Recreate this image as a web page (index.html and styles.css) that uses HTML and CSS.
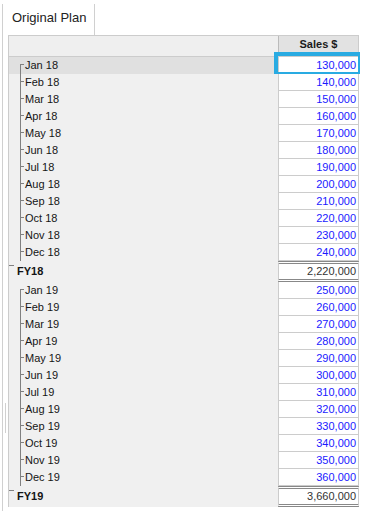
FILE: index.html
```html
<!DOCTYPE html>
<html>
<head>
<meta charset="utf-8">
<link rel="stylesheet" href="styles.css">
</head>
<body>
<div class="frame">
  <div class="grip"></div>
  <div class="tabs"><div class="tab">Original Plan</div></div>
  <div class="grid">
    <div class="hdr">
      <div class="corner"></div>
      <div class="colhdr">Sales $</div>
    </div>
    <div class="row sel"><div class="lab m first">Jan 18</div><div class="val">130,000</div></div>
    <div class="row"><div class="lab m">Feb 18</div><div class="val">140,000</div></div>
    <div class="row"><div class="lab m">Mar 18</div><div class="val">150,000</div></div>
    <div class="row"><div class="lab m">Apr 18</div><div class="val">160,000</div></div>
    <div class="row"><div class="lab m">May 18</div><div class="val">170,000</div></div>
    <div class="row"><div class="lab m">Jun 18</div><div class="val">180,000</div></div>
    <div class="row"><div class="lab m">Jul 18</div><div class="val">190,000</div></div>
    <div class="row"><div class="lab m">Aug 18</div><div class="val">200,000</div></div>
    <div class="row"><div class="lab m">Sep 18</div><div class="val">210,000</div></div>
    <div class="row"><div class="lab m">Oct 18</div><div class="val">220,000</div></div>
    <div class="row"><div class="lab m">Nov 18</div><div class="val">230,000</div></div>
    <div class="row"><div class="lab m">Dec 18</div><div class="val">240,000</div></div>
    <div class="row tot"><div class="lab fy">FY18</div><div class="val">2,220,000</div></div>
    <div class="row"><div class="lab m first">Jan 19</div><div class="val">250,000</div></div>
    <div class="row"><div class="lab m">Feb 19</div><div class="val">260,000</div></div>
    <div class="row"><div class="lab m">Mar 19</div><div class="val">270,000</div></div>
    <div class="row"><div class="lab m">Apr 19</div><div class="val">280,000</div></div>
    <div class="row"><div class="lab m">May 19</div><div class="val">290,000</div></div>
    <div class="row"><div class="lab m">Jun 19</div><div class="val">300,000</div></div>
    <div class="row"><div class="lab m">Jul 19</div><div class="val">310,000</div></div>
    <div class="row"><div class="lab m">Aug 19</div><div class="val">320,000</div></div>
    <div class="row"><div class="lab m">Sep 19</div><div class="val">330,000</div></div>
    <div class="row"><div class="lab m">Oct 19</div><div class="val">340,000</div></div>
    <div class="row"><div class="lab m">Nov 19</div><div class="val">350,000</div></div>
    <div class="row"><div class="lab m">Dec 19</div><div class="val">360,000</div></div>
    <div class="row tot"><div class="lab fy">FY19</div><div class="val">3,660,000</div></div>
    <div class="selbox"></div>
  </div>
</div>
</body>
</html>
```

FILE: styles.css
```css
html, body {
  margin: 0;
  padding: 0;
  background: #ffffff;
}
body {
  font-family: "Liberation Sans", Arial, sans-serif;
  font-size: 11px;
  color: #111;
  width: 372px;
  height: 511px;
  overflow: hidden;
}
.frame {
  position: relative;
  margin-left: 2px;
  margin-top: 4px;
  border-left: 1px solid #d0d0d0;
  height: 507px;
}
.grip {
  position: absolute;
  left: 2px;
  top: 399px;
  width: 1px;
  height: 30px;
  background: #d0d0d0;
}
.tabs {
  display: flex;
  height: 31px;
}
.tab {
  width: 92px;
  border-right: 1px solid #d0d0d0;
  box-sizing: border-box;
  padding-left: 9px;
  font-size: 13px;
  line-height: 28px;
  color: #222222;
}
.grid {
  position: relative;
  margin-left: 5px;
  width: 351px;
  display: flex;
  flex-direction: column;
  border-left: 1px solid #cccccc;
  box-sizing: border-box;
  background: #ffffff;
}
.hdr {
  display: flex;
  height: 22px;
  box-sizing: border-box;
  border-top: 1px solid #cccccc;
  border-bottom: 1px solid #cccccc;
  background: #efefef;
}
.corner {
  width: 269px;
}
.colhdr {
  width: 81px;
  box-sizing: border-box;
  border-left: 1px solid #bbbbbb;
  border-right: 1px solid #cccccc;
  background: #e2e2e2;
  text-align: center;
  font-weight: bold;
  line-height: 16px;
  color: #1a1a1a;
}
.row {
  display: flex;
  height: 17px;
}
.lab {
  position: relative;
  width: 269px;
  background: #f0f0f0;
  line-height: 17px;
  color: #151515;
  white-space: nowrap;
}
.row.sel .lab {
  background: #e0e0e0;
}
.lab.m {
  padding-left: 16px;
  box-sizing: border-box;
}
.lab.m::before {
  content: "";
  position: absolute;
  left: 11px;
  top: 0;
  bottom: 0;
  width: 1px;
  background: #808080;
}
.lab.m.first::before {
  top: 7px;
}
.lab.m::after {
  content: "";
  position: absolute;
  left: 11px;
  top: 7px;
  width: 4px;
  height: 1px;
  background: #808080;
}
.val {
  width: 81px;
  box-sizing: border-box;
  border-left: 1px solid #cccccc;
  border-right: 1px solid #cccccc;
  border-bottom: 1px solid #cccccc;
  background: #ffffff;
  text-align: right;
  padding-right: 2px;
  line-height: 16px;
  color: #1a1aff;
}
.row.tot {
  height: 21px;
}
.row.tot .val {
  border-top: 3px double #888888;
  border-bottom: 3px double #888888;
  line-height: 15px;
  color: #333333;
}
.lab.fy {
  font-weight: bold;
  padding-left: 8px;
  padding-top: 3px;
  line-height: 15px;
  box-sizing: border-box;
}
.lab.fy::before {
  content: "";
  position: absolute;
  left: 0;
  top: 4px;
  width: 5px;
  height: 1px;
  background: #808080;
}
.selbox {
  position: absolute;
  left: 265px;
  top: 17px;
  width: 86px;
  height: 22px;
  box-sizing: border-box;
  border-top: 4px solid #29abe2;
  border-left: 4px solid #29abe2;
  border-right: 2px solid #29abe2;
  border-bottom: 2px solid #29abe2;
}
```
